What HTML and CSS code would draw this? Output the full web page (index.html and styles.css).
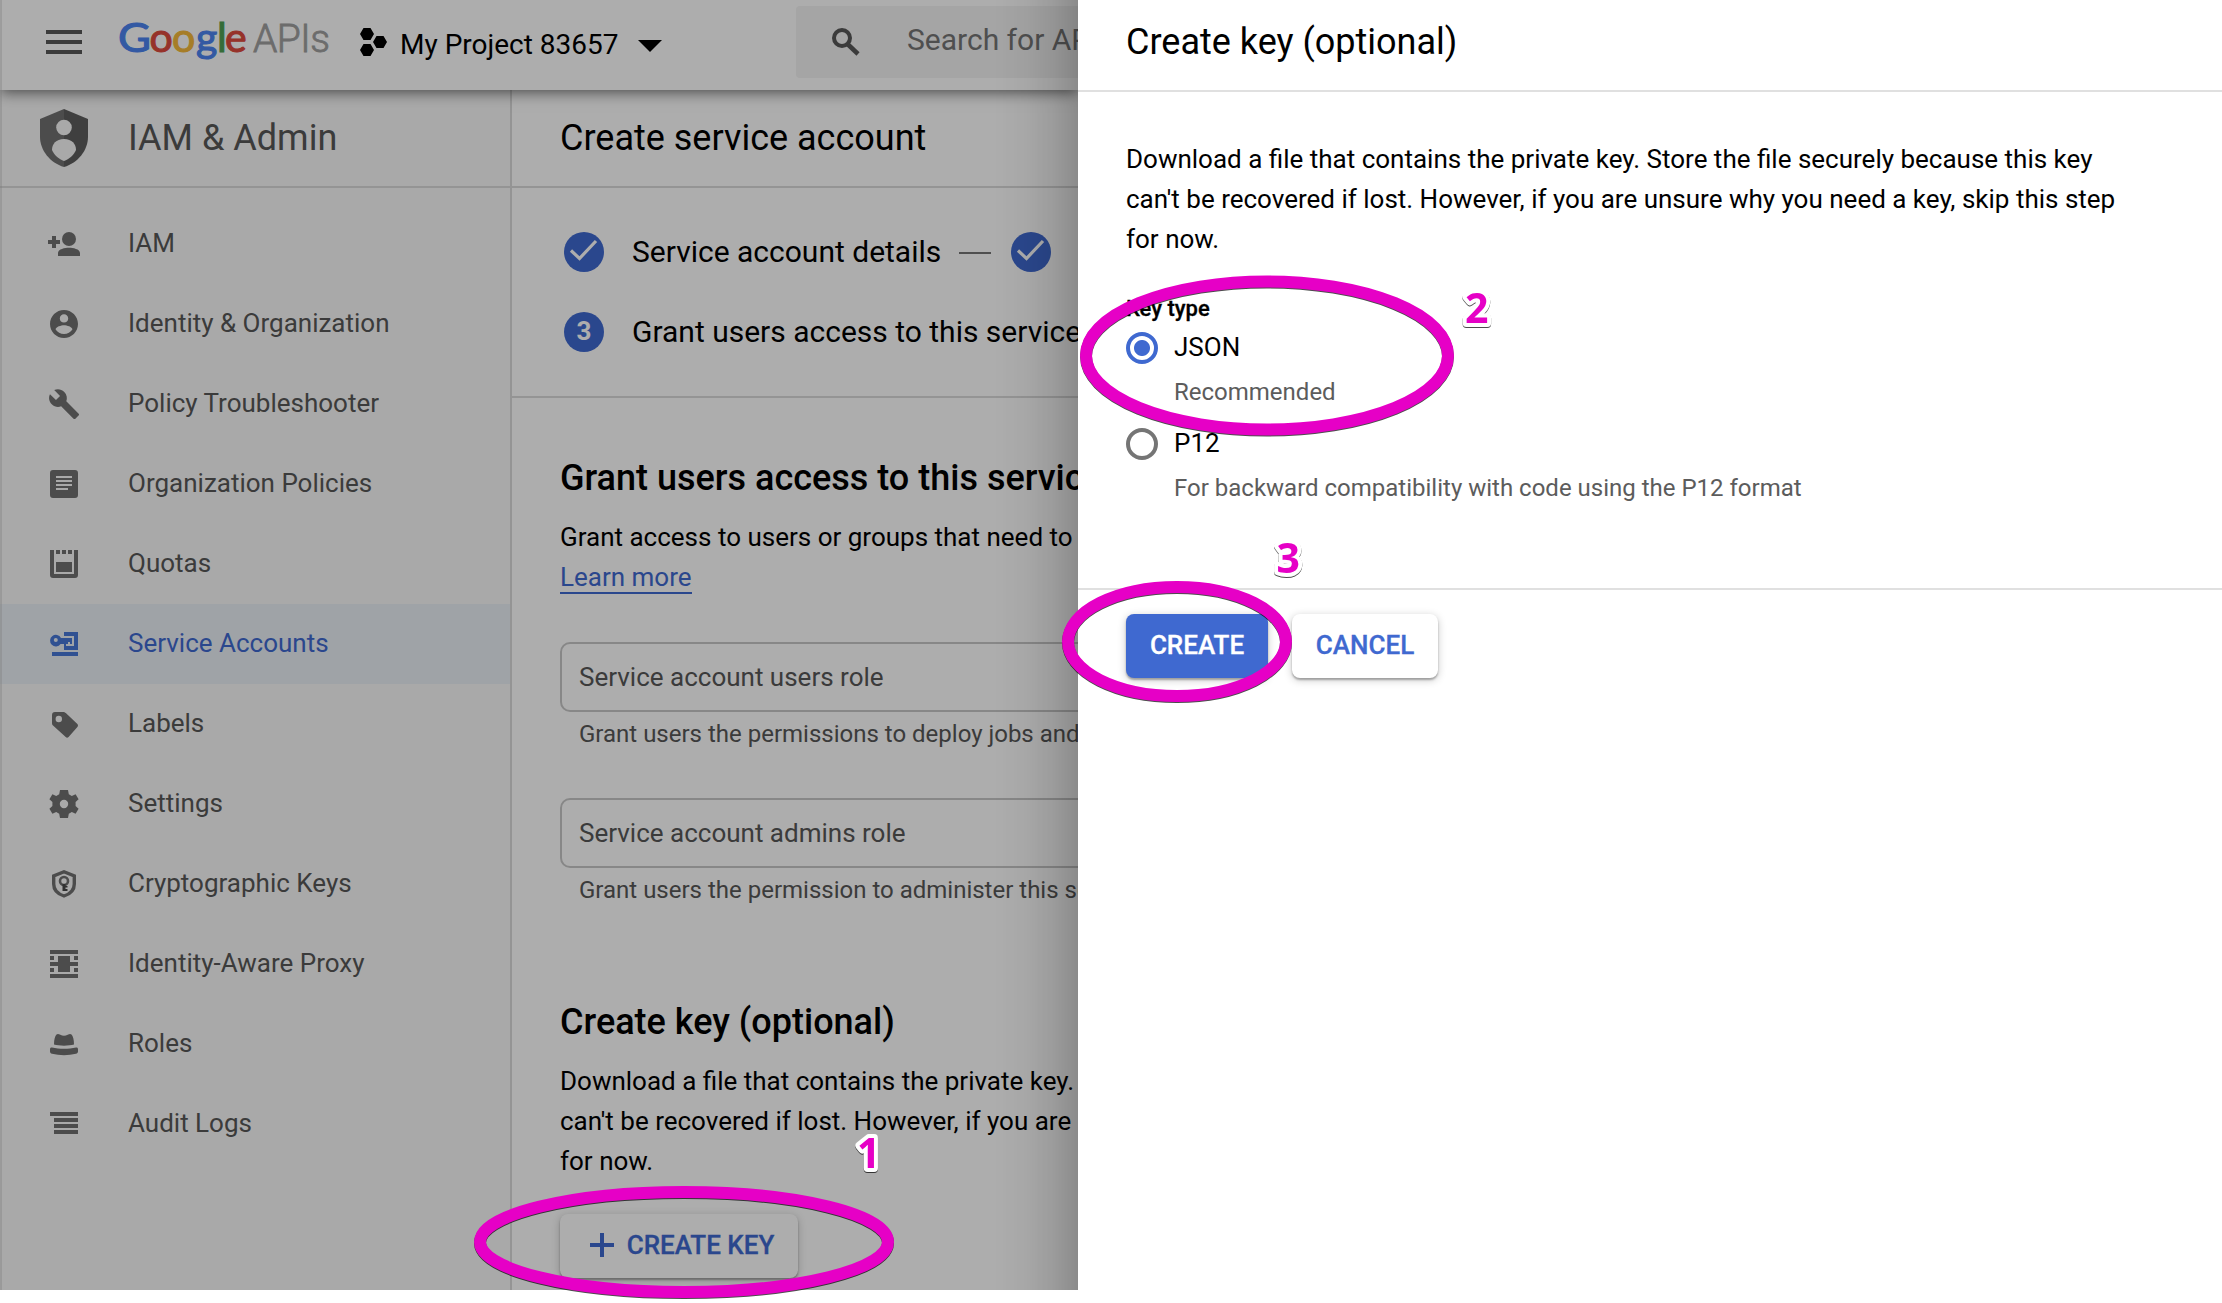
FILE: index.html
```html
<!DOCTYPE html>
<html lang="en">
<head>
<meta charset="utf-8">
<title>Create service account</title>
<link rel="stylesheet" href="styles.css">
</head>
<body>
<div class="app">
  <header class="topbar">
    <svg class="menu" width="36" height="24" viewBox="0 0 36 24"><path d="M0 0h36v4H0zM0 10h36v4H0zM0 20h36v4H0z"/></svg>
    <svg class="logo" width="220" height="56" viewBox="0 0 220 56">
      <g class="logo-google">
        <text class="blue" x="0" y="41.500" textLength="33" lengthAdjust="spacingAndGlyphs">G</text>
        <text class="red" x="31.500" y="41.500">o</text>
        <text class="yellow" x="54" y="41.500">o</text>
        <text class="blue" x="78" y="41.500">g</text>
        <text class="green" x="99" y="41.500">l</text>
        <text class="red" x="107" y="41.500">e</text>
      </g>
      <text class="logo-apis" x="135" y="42" textLength="77">APIs</text>
    </svg>
    <div class="project">
      <svg class="hexes" width="28" height="28" viewBox="0 0 28 28"><path d="M3.500 0h7l3.500 6-3.500 6h-7L0 6zM16.500 8h7l3.500 6-3.500 6h-7L13 14zM3.500 16h7l3.500 6-3.500 6h-7L0 22z"/></svg>
      <span class="project-name">My Project 83657</span>
      <svg class="caret" width="24" height="12" viewBox="0 0 24 12"><path d="M0 0h24L12 12z"/></svg>
    </div>
    <div class="search">
      <svg width="28" height="28" viewBox="0 0 28 28"><circle cx="10" cy="10" r="8" fill="none" stroke="#575757" stroke-width="4"/><path d="M15.500 16l10.500 10" stroke="#575757" stroke-width="4.500"/></svg>
      <span>Search for APIs and Services</span>
    </div>
  </header>
  <div class="columns">
    <aside class="sidebar">
      <div class="product">
        <svg width="48" height="58" viewBox="0 0 48 58"><path d="M24 0L0 10v18c0 13 10 26 24 30z" fill="#717171"/><path d="M24 0l24 10v18c0 13-10 26-24 30z" fill="#5e5e5e"/><circle cx="24" cy="18.500" r="7.800" fill="#fafafa"/><path d="M12 41c0-6 4-11 12-11s12 5 12 11c-2 5-7 9-12 11-5-2-10-6-12-11z" fill="#fafafa"/></svg>
        <span>IAM &amp; Admin</span>
      </div>
      <nav class="nav">
        <a class="item"><svg class="icon" viewBox="0 0 36 36"><path d="M6 10h4v4h4v4h-4v4H6v-4H2v-4h4zM12 30v-3c0-4 7-5.300 11-5.300s11 1.300 11 5.300v3z"/><circle cx="23" cy="13" r="7"/></svg><span>IAM</span></a>
        <a class="item"><svg class="icon" viewBox="0 0 36 36"><path transform="translate(1.200 1.200) scale(1.400)" d="M12 2C6.480 2 2 6.480 2 12s4.480 10 10 10 10-4.480 10-10S17.520 2 12 2zm0 3c1.660 0 3 1.340 3 3s-1.340 3-3 3-3-1.340-3-3 1.340-3 3-3zm0 14.200c-2.500 0-4.710-1.280-6-3.220.03-1.990 4-3.080 6-3.080 1.990 0 5.970 1.090 6 3.080-1.290 1.940-3.500 3.220-6 3.220z"/></svg><span>Identity &amp; Organization</span></a>
        <a class="item"><svg class="icon" viewBox="0 0 36 36"><path transform="translate(1.800 1.800) scale(1.360)" d="M22.700 19l-9.100-9.100c.9-2.300.4-5-1.500-6.900-2-2-5-2.400-7.400-1.300L9 6 6 9 1.600 4.700C.4 7.100.9 10.100 2.900 12.100c1.900 1.900 4.600 2.400 6.900 1.500l9.100 9.100c.4.4 1 .4 1.400 0l2.300-2.300c.5-.4.5-1.100.1-1.400z"/></svg><span>Policy Troubleshooter</span></a>
        <a class="item"><svg class="icon" viewBox="0 0 36 36"><path fill-rule="evenodd" d="M7 4h22a3 3 0 0 1 3 3v22a3 3 0 0 1-3 3H7a3 3 0 0 1-3-3V7a3 3 0 0 1 3-3zM10 10v2h16v-2zM10 14v2h16v-2zM10 18v2h16v-2zM10 22v2h12v-2z"/></svg><span>Organization Policies</span></a>
        <a class="item"><svg class="icon" viewBox="0 0 36 36"><path d="M4 4h4v24h20V4h4v25a3 3 0 0 1-3 3H7a3 3 0 0 1-3-3zM10 4h4v4h-4zM16 4h4v4h-4zM22 4h4v4h-4zM10 16h16v10H10z"/></svg><span>Quotas</span></a>
        <a class="item active"><svg class="icon" viewBox="0 0 36 36"><path fill-rule="evenodd" d="M18 6h14v18H18v-6h-3.400a5.800 5.800 0 1 1 .4-6h11v6h-2v-2h-2v2h-2v2h8V10H18zM9.800 12a2 2 0 1 0 0 4 2 2 0 0 0 0-4zM6 26h26v4H6z"/></svg><span>Service Accounts</span></a>
        <a class="item"><svg class="icon" viewBox="0 0 36 36"><path fill-rule="evenodd" d="M9 6h8c1.200 0 2 .4 2.800 1.100L31.400 18c.8.900.8 2 0 2.900L22.600 31c-.9.900-2 .9-2.900.1L7 19.500c-.7-.7-1-1.400-1-2.500V9a3 3 0 0 1 3-3zM12.800 9.800a3.200 3.200 0 1 0 0 6.400 3.200 3.200 0 0 0 0-6.400z"/></svg><span>Labels</span></a>
        <a class="item"><svg class="icon" viewBox="0 0 36 36"><path fill-rule="evenodd" d="M14 4h8l.8 4.200 3 1.700 3.800-1.600 3 5-3 2.700v4l3 2.700-3 5-3.800-1.600-3 1.700L22 32h-8l-.8-4.200-3-1.700-3.800 1.600-3-5 3-2.700v-4l-3-2.700 3-5 3.800 1.600 3-1.700zM18 13.800a4.200 4.200 0 1 0 0 8.400 4.200 4.200 0 0 0 0-8.400z"/></svg><span>Settings</span></a>
        <a class="item"><svg class="icon" viewBox="0 0 36 36"><path fill="none" stroke="#717171" stroke-width="3.400" d="M18 5.800L28.300 10v8c0 6-4 10-10.300 12-6.300-2-10.300-6-10.300-12v-8z"/><circle cx="18" cy="15" r="4" fill="none" stroke="#717171" stroke-width="2.600"/><path fill="#484848" d="M16.500 18h3v2h2v1.500h-2V23h2v2h-5z"/></svg><span>Cryptographic Keys</span></a>
        <a class="item"><svg class="icon" viewBox="0 0 36 36"><path d="M4 4h28v4H4zM4 28h28v4H4zM4 16h28v4H4zM12 10h12v16H12zM4 10h4v4H4zM28 10h4v4h-4zM4 22h4v4H4zM28 22h4v4h-4z"/></svg><span>Identity-Aware Proxy</span></a>
        <a class="item"><svg class="icon" viewBox="0 0 36 36"><path d="M8 18.500c0-5 1-8.500 2.500-10 1-1 2.500-.5 3.800.3 2.400 1.200 5 1.200 7.400 0 1.300-.8 2.800-1.300 3.800-.3 1.500 1.500 2.500 5 2.500 10-5 1.500-15 1.500-20 0zM4 23c0-1.200 1-1.800 2-1.500 7.500 1.800 16.500 1.800 24 0 1-.3 2 .3 2 1.500v2.500c0 1.300-.8 2-2 2.300-7.500 1.800-16.500 1.800-24 0-1.200-.3-2-1-2-2.300z"/></svg><span>Roles</span></a>
        <a class="item"><svg class="icon" viewBox="0 0 36 36"><path d="M4 6h28v4H4zM8 12h24v4H8zM8 18h24v4H8zM8 24h24v4H8z"/></svg><span>Audit Logs</span></a>
      </nav>
    </aside>
    <main class="main">
      <h1 class="page-title">Create service account</h1>
      <div class="stepper">
        <div class="step">
          <svg class="badge" viewBox="0 0 40 40"><circle cx="20" cy="20" r="20"/><path d="M7 18.500l8.500 8L32 9" fill="none" stroke="#fff" stroke-width="3.200"/></svg>
          <span>Service account details</span>
          <i class="dash"></i>
          <svg class="badge second" viewBox="0 0 40 40"><circle cx="20" cy="20" r="20"/><path d="M7 18.500l8.500 8L32 9" fill="none" stroke="#fff" stroke-width="3.200"/></svg>
        </div>
        <div class="step">
          <b class="number">3</b>
          <span>Grant users access to this service account (optional)</span>
        </div>
      </div>
      <section class="form">
        <h2>Grant users access to this service account</h2>
        <p>Grant access to users or groups that need to<br><a class="link">Learn more</a></p>
        <div class="field first">Service account users role</div>
        <div class="hint">Grant users the permissions to deploy jobs and VMs</div>
        <div class="field">Service account admins role</div>
        <div class="hint">Grant users the permission to administer this service account</div>
        <h2 class="key-heading">Create key (optional)</h2>
        <p>Download a file that contains the private key.<br>can't be recovered if lost. However, if you are<br>for now.</p>
        <button class="btn create-key"><svg width="24" height="24" viewBox="0 0 24 24"><path d="M10 0h4v10h10v4H14v10h-4V14H0v-4h10z"/></svg>CREATE KEY</button>
      </section>
    </main>
  </div>
  <div class="scrim"></div>
</div>
<aside class="panel">
  <h2 class="panel-title">Create key (optional)</h2>
  <div class="panel-body">
    <p>Download a file that contains the private key. Store the file securely because this key<br>can't be recovered if lost. However, if you are unsure why you need a key, skip this step<br>for now.</p>
    <h3>Key type</h3>
    <label class="option"><i class="radio checked"></i><span>JSON</span></label>
    <div class="option-hint">Recommended</div>
    <label class="option"><i class="radio"></i><span>P12</span></label>
    <div class="option-hint">For backward compatibility with code using the P12 format</div>
  </div>
  <div class="actions">
    <button class="btn primary">CREATE</button>
    <button class="btn cancel">CANCEL</button>
  </div>
</aside>
<svg class="annotations" width="2222" height="1303" viewBox="0 0 2222 1303">
  <g class="rings">
    <ellipse cx="684" cy="1242" rx="204" ry="50"/>
    <ellipse cx="1267" cy="355.500" rx="181" ry="74"/>
    <ellipse cx="1177" cy="641.500" rx="109" ry="54.500"/>
  </g>
  <g class="marks">
    <text x="857" y="1168">1</text>
    <text x="1465" y="323">2</text>
    <text x="1276.500" y="572.500">3</text>
  </g>
</svg>
</body>
</html>
```
FILE: styles.css
```css
* { box-sizing: border-box; }

body {
  margin: 0;
  display: grid;
  grid-template-columns: 1078px 1fr;
  width: 2222px;
  height: 1303px;
  overflow: hidden;
  position: relative;
  background: #fff;
  color: #000;
  font: 26px/40px Roboto, sans-serif;
}

h1, h2, h3, p { margin: 0; }

.app {
  position: relative;
  height: 1290px;
  overflow: hidden;
  background: #fff;
}

.scrim {
  position: absolute;
  inset: 0;
  border-left: 2px solid rgba(255, 255, 255, 0.15);
  background:
    linear-gradient(to left, rgba(0, 0, 0, 0.2), rgba(0, 0, 0, 0.1) 24px, rgba(0, 0, 0, 0.035) 52px, transparent 84px),
    rgba(0, 0, 0, 0.32);
}

.topbar {
  position: relative;
  display: flex;
  align-items: flex-start;
  height: 90px;
  background: #fff;
  box-shadow: 0 2px 14px rgba(0, 0, 0, 0.6);
}

.menu { margin: 30px 0 0 46px; fill: #575757; flex: none; }
.logo { margin: 10px 0 0 36px; flex: none; overflow: visible; }
.logo text { font-family: Lato, sans-serif; }
.logo-google text { font-size: 41px; stroke-width: 1.1px; }
.blue { fill: #4c84f0; stroke: #4c84f0; }
.red { fill: #dd4b3e; stroke: #dd4b3e; }
.yellow { fill: #f5b93a; stroke: #f5b93a; }
.green { fill: #4fa054; stroke: #4fa054; }
.logo .logo-apis { font-family: Roboto, sans-serif; font-size: 39px; font-weight: 300; fill: #a0a0a0; stroke: #a0a0a0; stroke-width: 0.8px; }

.project {
  display: flex;
  flex: none;
  margin-left: 22px;
}
.hexes { margin: 28px 12px 0 0; }
.project-name { width: 217px; margin-top: 25px; font-size: 28px; white-space: nowrap; }
.caret { margin: 40px 0 0 21px; }

.search {
  display: flex;
  align-items: flex-start;
  flex: none;
  width: 500px;
  height: 72px;
  margin: 6px 0 0 134px;
  padding: 22px 0 0 36px;
  border-radius: 4px;
  background: #f3f3f3;
  color: #757575;
  font-size: 30px;
  white-space: nowrap;
}
.search span { margin: -8px 0 0 47px; }

.columns { display: flex; height: 1200px; }

.sidebar {
  width: 512px;
  flex: none;
  border-right: 2px solid #dadada;
  background: #fafafa;
  color: #575757;
}

.product {
  display: flex;
  align-items: center;
  gap: 40px;
  height: 98px;
  padding-left: 40px;
  border-bottom: 2px solid #dadada;
  font-size: 36px;
}

.nav { padding-top: 16px; }
.item {
  display: flex;
  align-items: center;
  gap: 46px;
  height: 80px;
  padding-left: 46px;
}
.item span { padding-bottom: 2px; }
.icon { width: 36px; height: 36px; fill: #717171; }
.active { background: #ebf0f7; color: #3f69d0; }
.active .icon { fill: #4878d8; }

.main { width: 566px; white-space: nowrap; overflow: hidden; }

.page-title {
  height: 98px;
  padding-left: 48px;
  border-bottom: 2px solid #dadada;
  font-size: 36px;
  font-weight: 400;
  line-height: 96px;
}

.stepper {
  display: flex;
  flex-direction: column;
  gap: 40px;
  padding: 44px 0 44px 52px;
  border-bottom: 2px solid #dadada;
  font-size: 30px;
}
.step { display: flex; align-items: center; height: 40px; }
.step span { min-width: 308px; }
.badge { width: 40px; height: 40px; flex: none; margin-right: 28px; fill: #3f69d0; }
.second { margin: 0; }
.dash { width: 32px; height: 2px; margin: 2px 20px 0 18px; background: #757575; flex: none; }
.number {
  width: 40px;
  flex: none;
  margin-right: 28px;
  border-radius: 50%;
  background: #3f69d0;
  color: #fff;
  font-size: 26px;
  font-weight: 700;
  line-height: 39px;
  height: 40px;
  text-align: center;
}

.form { padding: 56px 0 0 48px; }
.form h2 { margin-bottom: 15px; font-size: 36px; font-weight: 500; line-height: 48px; }
.form .key-heading { margin: 92px 0 15px; }
.link { border-bottom: 2px solid #3f69d0; color: #3f69d0; }

.field {
  width: 700px;
  height: 70px;
  margin-top: 48px;
  padding-left: 17px;
  border: 2px solid #c8c8c8;
  border-radius: 10px;
  color: #575757;
  line-height: 66px;
}
.first { margin-top: 45px; }
.hint { margin: 6px 0 0 19px; color: #575757; font-size: 24px; line-height: 32px; }

.btn {
  display: flex;
  align-items: center;
  justify-content: center;
  height: 64px;
  padding: 0 0 2px;
  border: 0;
  border-radius: 8px;
  background: #fff;
  box-shadow: 0 2px 2px rgba(0, 0, 0, 0.28), 0 2px 8px rgba(0, 0, 0, 0.22);
  color: #3f69d0;
  font: 500 26px/40px Roboto, sans-serif;
  -webkit-text-stroke: 0.3px currentColor;
}
.create-key { gap: 13px; width: 238px; margin-top: 33px; padding-left: 6px; }
.create-key svg { fill: #3f69d0; }

.panel { height: 1290px; }
.panel-title {
  height: 92px;
  padding-left: 48px;
  border-bottom: 2px solid #e0e0e0;
  font-size: 36px;
  font-weight: 400;
  line-height: 84px;
}
.panel-body { height: 496px; padding: 47px 0 0 48px; white-space: nowrap; }
.panel-body h3 { margin: 35px 0 8px; font-size: 22px; font-weight: 500; line-height: 30px; -webkit-text-stroke: 0.3px #000; }
.option { display: flex; align-items: center; gap: 16px; height: 32px; }
.option span { padding-bottom: 2px; }
.radio { width: 32px; height: 32px; border: 4px solid #757575; border-radius: 50%; }
.checked { border-color: #3f69d0; background: radial-gradient(circle, #3f69d0 7.500px, #fff 8.500px); }
.option-hint { margin: 12px 0 20px 48px; color: #5c5c5c; font-size: 24px; line-height: 32px; }

.actions { display: flex; gap: 24px; padding: 24px 48px; border-top: 2px solid #e0e0e0; }
.primary { width: 142px; background: #3f69d0; color: #fff; }
.cancel { width: 146px; }

.annotations { position: absolute; left: 0; top: 0; }
.rings { fill: none; stroke: #e600c6; stroke-width: 12px; filter: drop-shadow(0 1px 0.5px rgba(0, 0, 0, 0.7)); }
.marks {
  fill: #e600c6;
  stroke: #fff;
  stroke-width: 8px;
  stroke-linejoin: round;
  paint-order: stroke;
  font: 700 41px "Open Sans", sans-serif;
  filter: drop-shadow(0 1px 0.7px rgba(0, 0, 0, 0.7));
}
```
